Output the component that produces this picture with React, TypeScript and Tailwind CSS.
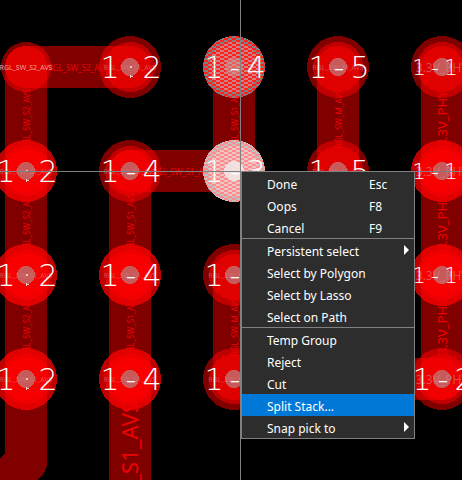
// src/App.tsx
const netFont = "font-['Noto_Sans',sans-serif]";
const labelFont = "font-['DejaVu_Sans',sans-serif] font-extralight";

type Pad = { x: number; y: number; net: string; label: string; double?: boolean; small?: boolean };

const pads: Pad[] = [
  { x: 130, y: 67, net: "RGL_SW_S2_AVS", label: "1:2" },
  { x: 338, y: 67, net: "RGL_SW_M_AVS", label: "1-5" },
  { x: 442, y: 67, net: "3.3V_PHY", label: "1-19", small: true },
  { x: 26, y: 171, net: "RGL_SW_S2_AVS", label: "1:2", double: true },
  { x: 130, y: 171, net: "RGL_SW_S1_AVS", label: "1-4" },
  { x: 338, y: 171, net: "RGL_SW_M_AVS", label: "1-5" },
  { x: 442, y: 171, net: "3.3V_PHY", label: "1-19", double: true, small: true },
  { x: 26, y: 275, net: "RGL_SW_S2_AVS", label: "1:2", double: true },
  { x: 130, y: 275, net: "RGL_SW_S1_AVS", label: "1-4", double: true },
  { x: 234, y: 275, net: "RGL_SW_M_AVS", label: "1-5" },
  { x: 442, y: 275, net: "3.3V_PHY", label: "1-19", double: true, small: true },
  { x: 26, y: 379, net: "RGL_SW_S2_AVS", label: "1:2", double: true },
  { x: 130, y: 379, net: "RGL_SW_S1_AVS", label: "1-4", double: true },
  { x: 234, y: 379, net: "RGL_SW_M_AVS", label: "1-5" },
  { x: 442, y: 379, net: "3.3V_PHY", label: "1-2" },
];

const traces = [
  "M26 67H130",
  "M26 67V171",
  "M26 171V275",
  "M26 275V379",
  "M26 379V462L-40 528",
  "M130 171H234",
  "M130 171V275",
  "M130 275V379",
  "M130 379V2000",
  "M234 67V171",
  "M234 275V379",
  "M338 67V171",
  "M338 379H442",
  "M442 67V171",
  "M442 171V275",
  "M442 275V379",
];

// net names printed along the vertical traces
const traceNets = [
  { x: 26, y: 119, net: "RGL_SW_S2_AVS" },
  { x: 26, y: 223, net: "RGL_SW_S2_AVS" },
  { x: 26, y: 327, net: "RGL_SW_S2_AVS" },
  { x: 130, y: 223, net: "RGL_SW_S1_AVS" },
  { x: 130, y: 327, net: "RGL_SW_S1_AVS" },
  { x: 234, y: 119, net: "RGL_SW_S1_AVS" },
  { x: 234, y: 327, net: "RGL_SW_M_AVS" },
  { x: 338, y: 119, net: "RGL_SW_M_AVS" },
];

function PinLabel({ x, y, label, small }: { x: number; y: number; label: string; small?: boolean }) {
  const step = small ? 16 : 21;
  const start = small ? x - 23 : x - 20;
  const dotted = label[1] === ":";
  return (
    <g fill="#fff">
      <text
        y={small ? y + 8 : y + 11}
        textAnchor="middle"
        className={`${labelFont} ${small ? "text-[22px]" : "text-[30px]"}`}
      >
        {label.split("").map((ch, i) =>
          dotted && i === 1 ? null : (
            <tspan key={i} x={start + step * i}>
              {ch}
            </tspan>
          )
        )}
      </text>
      {dotted && (
        <path d={`M${x} ${y - 1}h2v2h-2zM${x} ${y + 8}h1v1h2v1h-2v1h-1z`} fill="#ecc" shapeRendering="crispEdges" />
      )}
    </g>
  );
}

function Board() {
  return (
    <svg className="absolute inset-0 h-full w-full" aria-label="Board canvas">
      <defs>
        <pattern id="hatch" width="8" height="4" patternUnits="userSpaceOnUse">
          <rect width="8" height="4" fill="#ff2020" />
          <path d="M0 0h4v2H0zM4 2h4v2H4z" fill="#808080" shapeRendering="crispEdges" />
        </pattern>
        <pattern id="hatchInner" width="8" height="4" patternUnits="userSpaceOnUse">
          <rect width="8" height="4" fill="#ff2020" />
          <path d="M0 0h4v2H0zM4 2h4v2H4z" fill="#d08080" shapeRendering="crispEdges" />
        </pattern>
        <pattern id="hatchActive" width="8" height="4" patternUnits="userSpaceOnUse">
          <rect width="8" height="4" fill="#ff8c8c" />
          <path d="M0 0h4v2H0zM4 2h4v2H4z" fill="#c0c0c0" shapeRendering="crispEdges" />
        </pattern>
        <pattern id="hatchActiveInner" width="8" height="4" patternUnits="userSpaceOnUse">
          <rect width="8" height="4" fill="#ff8c8c" />
          <path d="M0 0h4v2H0zM4 2h4v2H4z" fill="#ecc4c4" shapeRendering="crispEdges" />
        </pattern>
      </defs>

      <g shapeRendering="crispEdges">
        {traces.map((d) => (
          <path
            key={d}
            d={d}
            fill="none"
            stroke="#ff0000"
            strokeOpacity="0.5"
            strokeWidth="42"
            strokeLinecap="round"
            strokeLinejoin="round"
          />
        ))}
        <circle cx="26" cy="67" r="25" fill="#ff0000" fillOpacity="0.5" />
        {pads.map((p) => (
          <g key={`${p.x}-${p.y}`} fill="#ff0000" fillOpacity="0.5">
            <circle cx={p.x} cy={p.y} r="31" />
            {p.double && <circle cx={p.x} cy={p.y} r="31" />}
            <circle cx={p.x} cy={p.y} r="25" />
            <circle cx={p.x} cy={p.y} r="9" fill="#c85a5a" fillOpacity="1" />
          </g>
        ))}
      </g>

      {/* Net names */}
      <g className={`${netFont} text-[8px]`} fill="#f00000" textAnchor="middle" dominantBaseline="central">
        {traceNets.map((t) => (
          <text key={`${t.x}-${t.y}`} transform={`translate(${t.x} ${t.y}) rotate(-90)`}>
            {t.net}
          </text>
        ))}
        <text x="78" y="67">RGL_SW_S2_AVS</text>
        <text x="182" y="171">RGL_SW_S1_AVS</text>
      </g>
      <g className={`${netFont} text-[13px]`} fill="#f00000" textAnchor="middle" dominantBaseline="central">
        {[119, 223, 327].map((y) => (
          <text key={y} transform={`translate(442 ${y}) rotate(-90)`}>
            3.3V_PHY
          </text>
        ))}
      </g>
      <g className={`${netFont} text-[22px]`} fill="#f00000" textAnchor="end" dominantBaseline="central">
        <text transform="translate(129 401) rotate(-90)">RGL_SW_S1_AVS</text>
        <text transform="translate(4 482) rotate(-45)">RGL_SW_S2_AVS</text>
      </g>
      <text
        x="26"
        y="67"
        textAnchor="middle"
        dominantBaseline="central"
        fill="#f0a0a0"
        className={`${netFont} text-[7px]`}
      >
        RGL_SW_S2_AVS
      </text>
      {pads.map((p) => (
        <text
          key={`${p.x}-${p.y}`}
          x={p.x}
          y={p.y}
          textAnchor="middle"
          dominantBaseline="central"
          fill="#d08080"
          fillOpacity="0.6"
          className={`${netFont} ${p.net === "3.3V_PHY" ? "text-[12px]" : "text-[7px]"}`}
        >
          {p.net}
        </text>
      ))}

      {/* Highlighted pads */}
      <g shapeRendering="crispEdges">
        <circle cx="234" cy="67" r="31" fill="url(#hatch)" />
        <circle cx="234" cy="67" r="25" fill="url(#hatchInner)" />
        <circle cx="234" cy="67" r="9" fill="#c8a0a0" fillOpacity="0.5" />
        <circle cx="234" cy="171" r="31" fill="url(#hatchActive)" />
        <circle cx="234" cy="171" r="25" fill="url(#hatchActiveInner)" />
        <circle cx="234" cy="171" r="10" fill="#f2e6e6" fillOpacity="0.9" />
      </g>

      {pads.map((p) => (
        <PinLabel key={`${p.x}-${p.y}`} x={p.x} y={p.y} label={p.label} small={p.small} />
      ))}
      <PinLabel x={234} y={67} label="1-4" />
      <PinLabel x={234} y={171} label="1-3" />

      {/* Crosshair */}
      <g fill="#808080" shapeRendering="crispEdges">
        <rect x="240" y="0" width="1" height="100%" />
        <rect x="0" y="171" width="100%" height="1" />
      </g>
    </svg>
  );
}

type Item = { name: string; shortcut?: string; submenu?: boolean; active?: boolean };

const groups: Item[][] = [
  [
    { name: "Done", shortcut: "Esc" },
    { name: "Oops", shortcut: "F8" },
    { name: "Cancel", shortcut: "F9" },
  ],
  [
    { name: "Persistent select", submenu: true },
    { name: "Select by Polygon" },
    { name: "Select by Lasso" },
    { name: "Select on Path" },
  ],
  [
    { name: "Temp Group" },
    { name: "Reject" },
    { name: "Cut" },
    { name: "Split Stack...", active: true },
    { name: "Snap pick to", submenu: true },
  ],
];

function ContextMenu() {
  return (
    <div
      role="menu"
      className="absolute left-[241px] top-[171px] w-[174px] divide-y divide-[#808080] border border-[#808080] bg-[#2d2d2d] font-['Noto_Sans',sans-serif] text-xs text-white"
    >
      {groups.map((group, i) => (
        <div key={i} role="group">
          {group.map((item) => (
            <button
              key={item.name}
              type="button"
              role="menuitem"
              className={`flex h-[22px] w-full items-center pl-[25px] pr-1 pt-[3px] text-left ${
                item.active ? "bg-[#0078d7]" : "hover:bg-[#3d3d3d]"
              }`}
            >
              <span className="flex-1 whitespace-nowrap">{item.name}</span>
              {item.shortcut && <span className="w-[41px]">{item.shortcut}</span>}
              {item.submenu && (
                <svg width="6" height="12" viewBox="0 0 6 12" className="mb-1" aria-hidden="true">
                  <path d="M0 1l5 5-5 5z" fill="#fff" />
                </svg>
              )}
            </button>
          ))}
        </div>
      ))}
    </div>
  );
}

export default function App() {
  return (
    <main className="relative h-screen w-full overflow-hidden bg-black">
      <Board />
      <ContextMenu />
    </main>
  );
}
